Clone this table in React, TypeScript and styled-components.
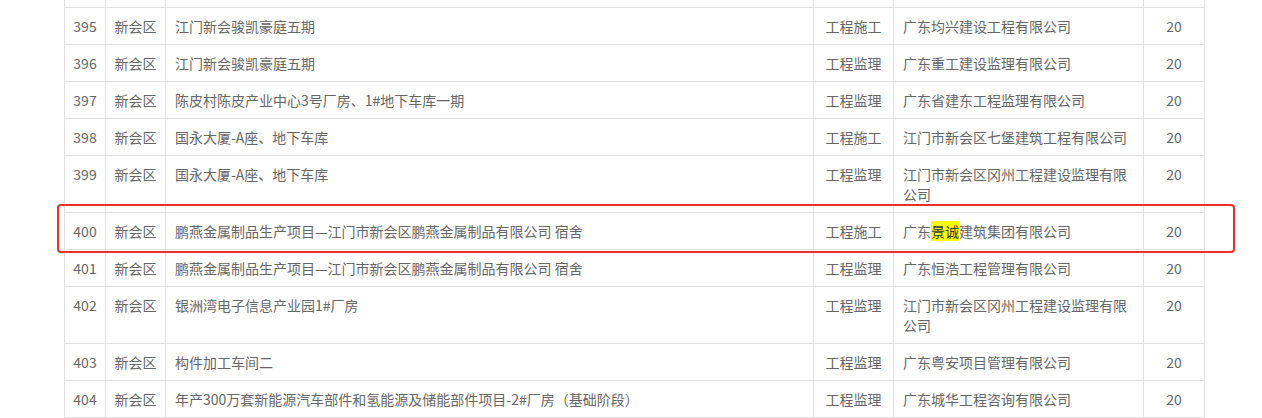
import React from 'react';
import styled, { createGlobalStyle } from 'styled-components';

const GlobalStyle = createGlobalStyle`
  body {
    margin: 0;
    background: #fff;
    font-family: "Microsoft YaHei", "Noto Sans CJK SC", "Noto Sans", sans-serif;
  }
`;

interface Row {
  no: number;
  area: string;
  project: string;
  kind: string;
  company: string;
  mark?: [string, string, string];
  score: number;
}

const rows: Row[] = [
  { no: 395, area: '新会区', project: '江门新会骏凯豪庭五期', kind: '工程施工', company: '广东均兴建设工程有限公司', score: 20 },
  { no: 396, area: '新会区', project: '江门新会骏凯豪庭五期', kind: '工程监理', company: '广东重工建设监理有限公司', score: 20 },
  { no: 397, area: '新会区', project: '陈皮村陈皮产业中心3号厂房、1#地下车库一期', kind: '工程监理', company: '广东省建东工程监理有限公司', score: 20 },
  { no: 398, area: '新会区', project: '国永大厦-A座、地下车库', kind: '工程施工', company: '江门市新会区七堡建筑工程有限公司', score: 20 },
  { no: 399, area: '新会区', project: '国永大厦-A座、地下车库', kind: '工程监理', company: '江门市新会区冈州工程建设监理有限公司', score: 20 },
  { no: 400, area: '新会区', project: '鹏燕金属制品生产项目—江门市新会区鹏燕金属制品有限公司 宿舍', kind: '工程施工', company: '', mark: ['广东', '景诚', '建筑集团有限公司'], score: 20 },
  { no: 401, area: '新会区', project: '鹏燕金属制品生产项目—江门市新会区鹏燕金属制品有限公司 宿舍', kind: '工程监理', company: '广东恒浩工程管理有限公司', score: 20 },
  { no: 402, area: '新会区', project: '银洲湾电子信息产业园1#厂房', kind: '工程监理', company: '江门市新会区冈州工程建设监理有限公司', score: 20 },
  { no: 403, area: '新会区', project: '构件加工车间二', kind: '工程监理', company: '广东粤安项目管理有限公司', score: 20 },
  { no: 404, area: '新会区', project: '年产300万套新能源汽车部件和氢能源及储能部件项目-2#厂房（基础阶段）', kind: '工程监理', company: '广东城华工程咨询有限公司', score: 20 },
];

const widths = [41, 60, 648, 80, 250, 61];

export default function App() {
  return (
    <>
      <GlobalStyle />
      <Page>
        <Table>
          <colgroup>
            {widths.map((w, i) => (
              <col key={i} style={{ width: w }} />
            ))}
          </colgroup>
          <tbody>
            <tr>
              {widths.map((_, i) => (
                <Filler key={i} />
              ))}
            </tr>
            {rows.map((r) => (
              <tr key={r.no}>
                <Cell $align='center'>{r.no}</Cell>
                <Cell $align='center'>{r.area}</Cell>
                <Cell>{r.project}</Cell>
                <Cell $align='center'>{r.kind}</Cell>
                <Cell>
                  {r.mark ? (
                    <>
                      {r.mark[0]}
                      <Mark>{r.mark[1]}</Mark>
                      {r.mark[2]}
                    </>
                  ) : (
                    r.company
                  )}
                </Cell>
                <Cell $align='center'>{r.score}</Cell>
              </tr>
            ))}
          </tbody>
        </Table>
        <Highlight />
      </Page>
    </>
  );
}

const Page = styled.div`
  position: relative;
  padding-left: 64px;
  height: 418px;
  overflow: hidden;
`;

const Table = styled.table`
  width: 1140px;
  table-layout: fixed;
  border-collapse: collapse;
  font-size: 14px;
  line-height: 20px;
  color: #666;
`;

const Filler = styled.td`
  height: 7px;
  padding: 0;
  border: 1px solid #e0e0e0;
  border-top: none;
`;

const Cell = styled.td<{ $align?: 'left' | 'center' }>`
  border: 1px solid #e0e0e0;
  padding: ${({ $align }) => ($align === 'center' ? '8px 2px' : '8px 8px 8px 9px')};
  vertical-align: top;
  text-align: ${({ $align }) => $align || 'left'};
  white-space: ${({ $align }) => ($align === 'center' ? 'nowrap' : 'normal')};
  word-break: break-all;
`;

const Mark = styled.mark`
  background: #ffff00;
  color: #333;
`;

const Highlight = styled.div`
  position: absolute;
  left: 57px;
  top: 204px;
  width: 1178px;
  height: 49px;
  box-sizing: border-box;
  border: 2.5px solid #e8302c;
  border-radius: 4px;
  pointer-events: none;
`;
